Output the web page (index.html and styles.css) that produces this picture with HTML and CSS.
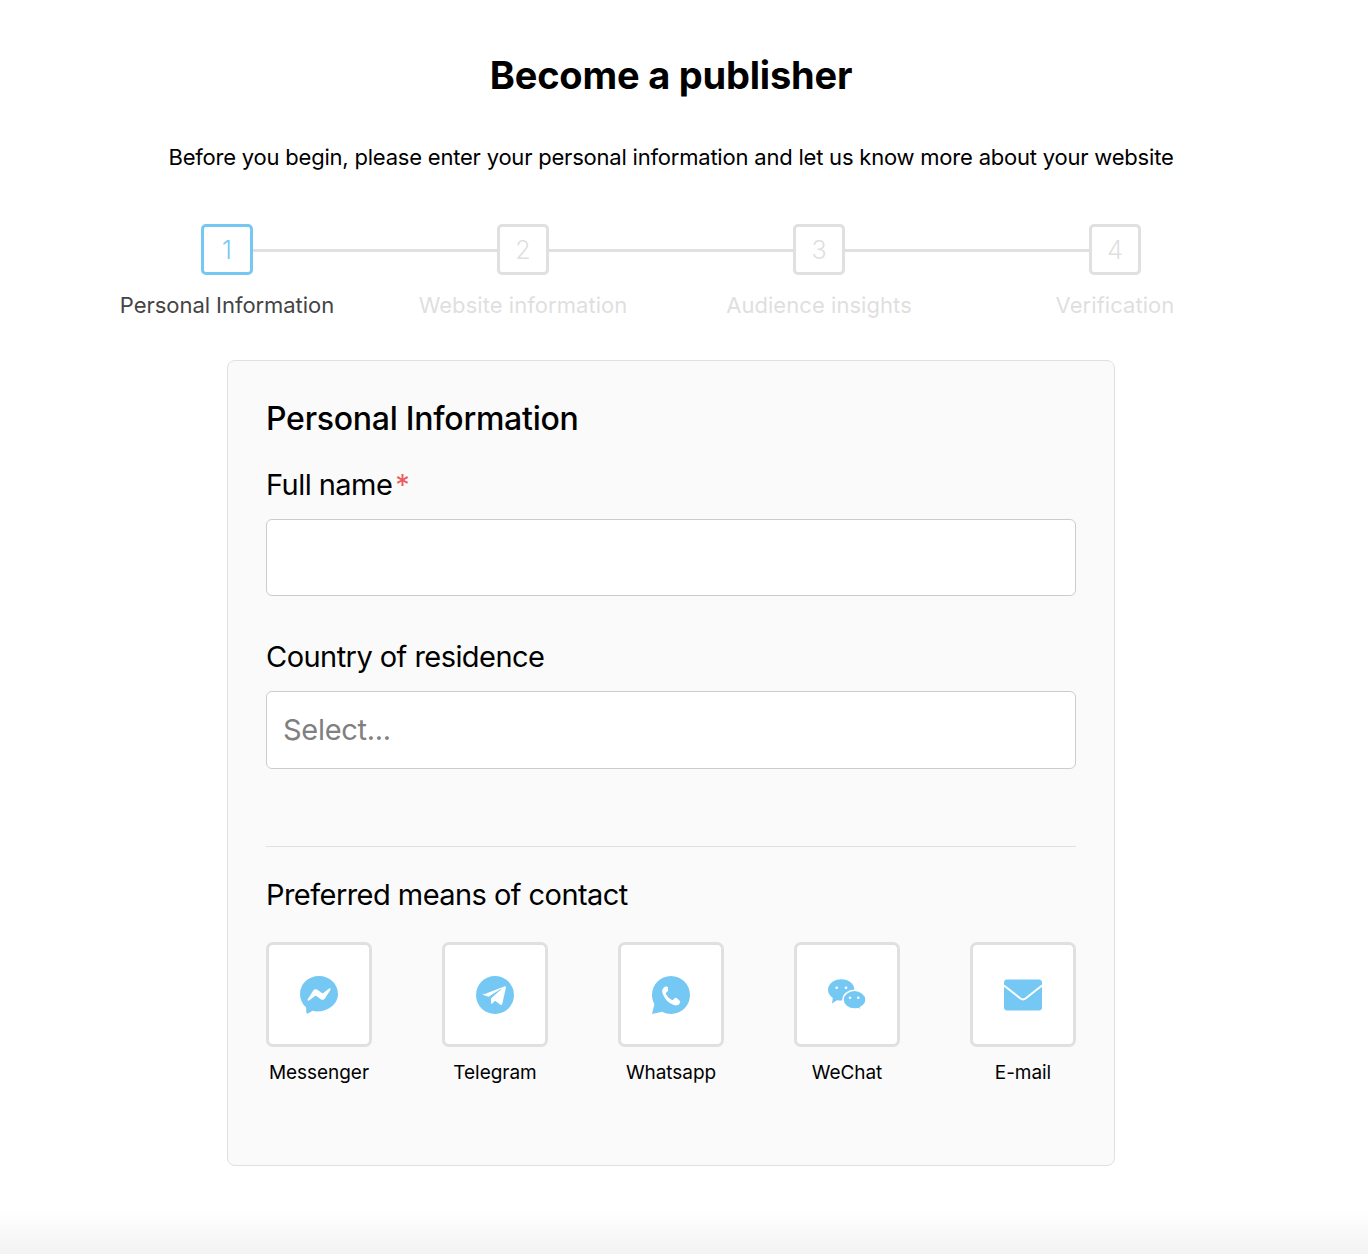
FILE: index.html
```html
<!DOCTYPE html>
<html lang="en">
<head>
  <meta charset="UTF-8" />
  <meta name="viewport" content="width=device-width, initial-scale=1.0"/>
  <title>Become a publisher</title>
  <link rel="stylesheet" href="styles.css">
</head>
<body>
  <main class="page">
    <h1>Become a publisher</h1>
    <p class="intro">Before you begin, please enter your personal information and let us know more about your website</p>

    <ol class="steps">
      <li class="step active"><span class="step-num">1</span><span class="step-name">Personal Information</span></li>
      <li class="step"><span class="step-num">2</span><span class="step-name">Website information</span></li>
      <li class="step"><span class="step-num">3</span><span class="step-name">Audience insights</span></li>
      <li class="step"><span class="step-num">4</span><span class="step-name">Verification</span></li>
    </ol>

    <form class="card">
      <h2>Personal Information</h2>

      <label class="field-label" for="fullName">Full name<span class="req">*</span></label>
      <input class="field" type="text" id="fullName" />

      <label class="field-label second" for="country">Country of residence</label>
      <input class="field tall" type="text" id="country" placeholder="Select..." />

      <hr class="divider" />

      <h3 class="field-label">Preferred means of contact</h3>
      <div class="contacts">
        <div class="contact">
          <span class="contact-box">
            <svg viewBox="0 0 38 38" class="icon"><path class="fill" d="M19 0C8.400 0 0 7.800 0 18c0 5.300 2.200 9.900 5.700 13.100.6.500.5.900.6 5.200 0 .9.900 1.500 1.700 1.100 3.700-1.600 3.800-2.800 4.400-2.600C23.200 37.700 38 30.600 38 18 38 7.800 29.600 0 19 0z"/><path class="cut" d="M7.700 23.300l5.600-8.800c.9-1.400 2.800-1.800 4.100-.8l4.400 3.300c.4.300 1 .3 1.400 0l6-4.500c.8-.6 1.800.3 1.300 1.200l-5.600 8.800c-.9 1.400-2.800 1.800-4.100.8l-4.400-3.300c-.4-.3-1-.3-1.400 0l-6 4.500c-.8.600-1.800-.3-1.300-1.200z"/></svg>
          </span>
          <span class="contact-name">Messenger</span>
        </div>
        <div class="contact">
          <span class="contact-box">
            <svg viewBox="0 0 38 38" class="icon"><circle class="fill" cx="19" cy="19" r="19"/><path class="cut" d="M7.500 18.600l20.800-8.200c1-.4 1.800.2 1.500 1.500l-3.500 15.900c-.3 1.200-1 1.500-1.900.9l-5.300-3.900-2.600 2.500c-.4.400-.8.700-1.300.5l-.3-5.300L25 13.500c.4-.4-.1-.6-.6-.3l-11.900 7.500-5-1.600c-1.100-.3-1.100-1 0-1.500z"/></svg>
          </span>
          <span class="contact-name">Telegram</span>
        </div>
        <div class="contact">
          <span class="contact-box">
            <svg viewBox="0 0 38 38" class="icon"><path class="fill" d="M19 0C8.500 0 0 8.500 0 19c0 3.300.9 6.500 2.400 9.200L0 38l10.300-2.200C13 37.200 16 38 19 38c10.500 0 19-8.500 19-19S29.500 0 19 0z"/><path class="cut" transform="translate(2 2.500) scale(.94)" d="M13.300 8.600c-1-.2-2 .2-2.800 1-1.600 1.500-2.300 3.400-1.600 5.600 2 6.200 6 10.600 12.200 13 2.100.8 4.200.5 5.800-1.100 1.300-1.300 1.300-2.500.1-3.700l-2.600-2.300c-1-.9-2-.8-2.900.2l-1.100 1.200c-.5.500-1 .6-1.600.2-2.700-1.500-4.700-3.600-6.100-6.300-.3-.6-.2-1.100.3-1.500l1.300-1.200c.9-.9 1-1.900.3-2.900L15 9.700c-.4-.6-1-1-1.700-1.100z"/></svg>
          </span>
          <span class="contact-name">Whatsapp</span>
        </div>
        <div class="contact">
          <span class="contact-box">
            <svg viewBox="0 0 38 38" class="icon"><path class="fill" d="M13.200 3.300C5.900 3.300 0 8 0 13.800c0 3.300 1.900 6.200 4.800 8.100L4 27.500l5-3.300c1.300.3 2.700.4 4.200.4 7.300 0 13.200-4.700 13.200-10.800S20.500 3.300 13.200 3.300z"/><path class="ring" d="M26.500 14.300c-6.300 0-11.500 4.200-11.500 9.400s5.200 9.400 11.500 9.400c1.200 0 2.400-.2 3.500-.5l3.300 1.800-.8-3c3.200-1.700 5.500-4.500 5.500-7.700 0-5.200-5.200-9.400-11.500-9.400z"/><circle class="cut" cx="8.700" cy="11.700" r="1.300"/><circle class="cut" cx="18" cy="11.700" r="1.300"/><circle class="cut" cx="22" cy="21.700" r="1.200"/><circle class="cut" cx="30.300" cy="21.700" r="1.200"/></svg>
          </span>
          <span class="contact-name">WeChat</span>
        </div>
        <div class="contact">
          <span class="contact-box">
            <svg viewBox="0 0 38 38" class="icon"><path class="fill" d="M3 3.500h32c1.700 0 3 1.300 3 3v25c0 1.700-1.300 3-3 3H3c-1.700 0-3-1.300-3-3v-25c0-1.700 1.300-3 3-3z"/><path class="line" d="M0 9.500l16.500 13c1.500 1.100 3.500 1.100 5 0l16.500-13"/></svg>
          </span>
          <span class="contact-name">E-mail</span>
        </div>
      </div>
    </form>
  </main>
</body>
</html>
```

FILE: styles.css
```css
body {
  font-family: Inter, "Liberation Sans", sans-serif;
  margin: 0;
  min-height: 1254px;
  color: #000;
  background: linear-gradient(to bottom, #fff calc(100% - 44px), #f3f3f3 100%);
}

.page {
  width: 1342px;
  padding-top: 52px;
  box-sizing: border-box;
  display: flex;
  flex-direction: column;
  align-items: center;
}

h1 {
  margin: 0;
  font-size: 38px;
  line-height: 46px;
  font-weight: 700;
  letter-spacing: -0.2px;
}

.intro {
  margin: 44px 0 0;
  font-size: 22px;
  line-height: 30px;
  letter-spacing: -0.21px;
}

/* Stepper */
.steps {
  list-style: none;
  display: flex;
  margin: 52px 0 0;
  padding: 0;
}

.step {
  position: relative;
  width: 296px;
  display: flex;
  flex-direction: column;
  align-items: center;
  color: #dfdfdf;
}

.step:not(:last-child)::after {
  content: "";
  position: absolute;
  left: 50%;
  top: 25px;
  width: 100%;
  height: 3px;
  background: #e0e0e0;
}

.step-num {
  position: relative;
  z-index: 1;
  width: 52px;
  height: 51px;
  box-sizing: border-box;
  display: flex;
  align-items: center;
  justify-content: center;
  background: #fff;
  border: 3px solid #e0e0e0;
  border-radius: 5px;
  font-size: 25px;
  font-weight: 300;
}

.step-name {
  margin-top: 15px;
  font-size: 22px;
  line-height: 30px;
  letter-spacing: 0.05px;
  white-space: nowrap;
}

.step.active { color: #444; }

.step.active .step-name { letter-spacing: -0.05px; }

.step.active .step-num {
  border-color: #76c8f4;
  color: #76c8f4;
}

/* Card */
.card {
  width: 888px;
  height: 806px;
  box-sizing: border-box;
  margin-top: 40px;
  padding: 38px;
  background: #fafafa;
  border: 1px solid #e0e0e0;
  border-radius: 8px;
}

h2 {
  margin: 0;
  font-size: 32px;
  line-height: 40px;
  font-weight: 500;
  letter-spacing: -0.25px;
}

.field-label {
  display: block;
  margin: 0;
  font-size: 29px;
  line-height: 36px;
  font-weight: 400;
  letter-spacing: -0.55px;
}

label.field-label { margin-top: 28px; }
label.second { margin-top: 43px; }

.req {
  margin-left: 3px;
  color: #ee5a5f;
}

.field {
  display: block;
  width: 100%;
  height: 77px;
  box-sizing: border-box;
  margin-top: 16px;
  padding: 0 16px;
  background: #fff;
  border: 1px solid #ccc;
  border-radius: 6px;
  font-family: inherit;
  font-size: 29px;
  letter-spacing: -0.3px;
}

.field.tall {
  height: 78px;
  padding-bottom: 1px;
}

.field::placeholder {
  color: #808080;
  opacity: 1;
}

.divider {
  margin: 77px 0 0;
  border: 0;
  border-top: 1px solid #e0e0e0;
}

h3.field-label { margin-top: 30px; }

/* Contact options */
.contacts {
  display: flex;
  justify-content: space-between;
  margin-top: 29px;
}

.contact {
  width: 106px;
  display: flex;
  flex-direction: column;
  align-items: center;
}

.contact-box {
  width: 106px;
  height: 105px;
  box-sizing: border-box;
  display: flex;
  align-items: center;
  justify-content: center;
  background: #fff;
  border: 3px solid #e0e0e0;
  border-radius: 7px;
}

.contact-name {
  margin-top: 12px;
  font-size: 19px;
  line-height: 28px;
  letter-spacing: -0.05px;
  white-space: nowrap;
}

.icon {
  width: 38px;
  height: 38px;
}

.fill { fill: #76c8f4; }
.cut { fill: #fff; }
.ring { fill: #76c8f4; stroke: #fff; stroke-width: 1.500; }
.line { fill: none; stroke: #fff; stroke-width: 2; }
```
